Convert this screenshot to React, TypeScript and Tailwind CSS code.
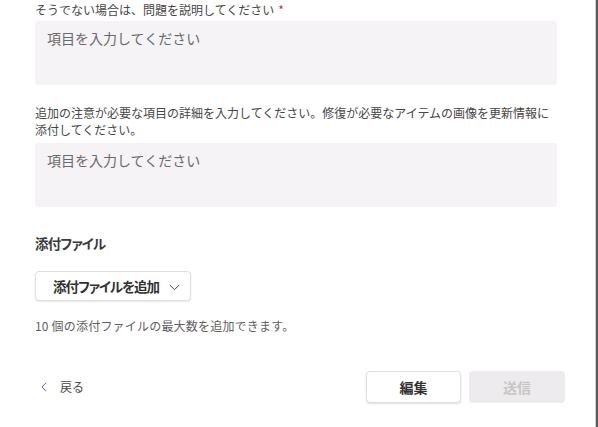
import React from "react";

export default function App() {
  const font = { fontFamily: '"Noto Sans CJK JP", "Noto Sans", sans-serif' };
  return (
    <div
      className="flex w-[598px] h-[427px] overflow-hidden bg-white"
      style={font}
    >
      <div className="flex-1 flex flex-col pl-[35px]">
        <div className="pt-[2px] text-[12px] leading-[16px] text-[#484644]">
          そうでない場合は、問題を説明してください
          <span className="text-[#c4314b] ml-[4px]">*</span>
        </div>
        <div className="mt-[3px] w-[522px] h-[64px] rounded-[3px] bg-[#f5f3f6] px-[12px] pt-[8px] text-[14px] leading-[18px] text-[#6a6968]">
          項目を入力してください
        </div>

        <div className="mt-[19px] w-[522px] text-[12px] leading-[17px] text-[#484644]">
          追加の注意が必要な項目の詳細を入力してください。修復が必要なアイテムの画像を更新情報に添付してください。
        </div>
        <div className="mt-[5px] w-[522px] h-[64px] rounded-[3px] bg-[#f5f3f6] px-[12px] pt-[8px] text-[14px] leading-[18px] text-[#6a6968]">
          項目を入力してください
        </div>

        <div className="mt-[26px] text-[13.5px] leading-[20px] tracking-[-0.8px] font-bold text-[#3b3a39] [font-feature-settings:'palt']">
          添付ファイル
        </div>

        <div className="mt-[18px] flex">
          <button className="flex items-center whitespace-nowrap h-[30px] pl-[17px] pr-[10px] rounded-[4px] border border-[#e1dfdd] bg-white shadow-[0_1px_2px_rgba(0,0,0,0.1)] text-[13.5px] tracking-[-1px] font-bold text-[#323130] [font-feature-settings:'palt']">
            <span>添付ファイルを追加</span>
            <svg
              width="11"
              height="7"
              viewBox="0 0 11 7"
              className="ml-[10px] mt-[3px]"
            >
              <path
                d="M0.8 1 L5.5 5.7 L10.2 1"
                fill="none"
                stroke="#484644"
                strokeWidth="1"
              />
            </svg>
          </button>
        </div>

        <div className="mt-[17px] text-[12px] leading-[16px] tracking-[0.2px] text-[#605e5c]">
          10 個の添付ファイルの最大数を追加できます。
        </div>

        <div className="mt-[37px] w-[530px] flex items-center justify-between">
          <button className="flex items-center pl-[6px] text-[12px] text-[#484644]">
            <svg width="6" height="10" viewBox="0 0 6 10">
              <path
                d="M5 0.8 L1 5 L5 9.2"
                fill="none"
                stroke="#5b5d9a"
                strokeWidth="1"
              />
            </svg>
            <span className="ml-[13px]">戻る</span>
          </button>
          <div className="flex gap-[8px]">
            <button className="h-[32px] w-[95px] rounded-[4px] border border-[#e1dfdd] bg-white shadow-[0_1px_2px_rgba(0,0,0,0.12)] text-[14px] font-bold text-[#323130]">
              編集
            </button>
            <button className="h-[32px] w-[96px] rounded-[4px] bg-[#edebee] text-[14px] font-bold text-[#c8c6c4]">
              送信
            </button>
          </div>
        </div>
      </div>
      <div className="w-[3px] h-full border-l border-[#d0d0d0] bg-[#5a5a5a]" />
    </div>
  );
}
